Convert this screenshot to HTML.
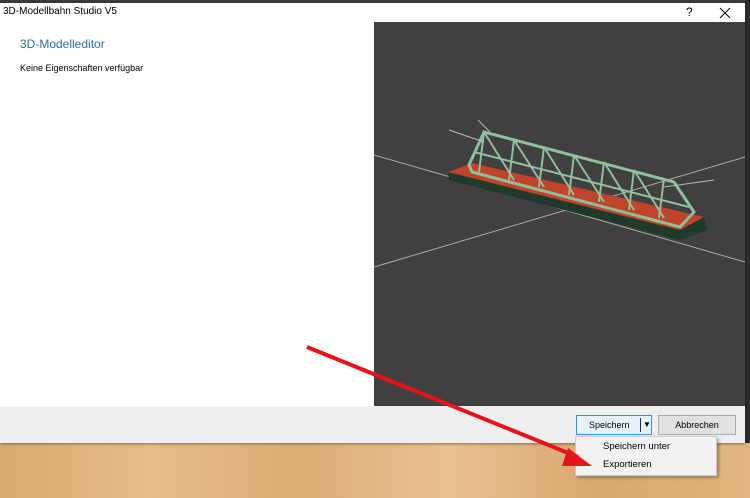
<!DOCTYPE html>
<html><head><meta charset="utf-8"><style>
body{margin:0;width:750px;height:498px;overflow:hidden;position:relative;font-family:"Liberation Sans",sans-serif;background:linear-gradient(90deg,#d9ab72,#e6bd88 20%,#dcae77 40%,#e8c291 60%,#d8a96f 80%,#e2b680);}
.a{position:absolute}
</style></head><body>
<div class="a" style="left:0;top:0;width:750px;height:3px;background:#3a3a3a"></div>
<div class="a" style="left:745px;top:0;width:5px;height:443px;background:#2c2c2c"></div>
<div class="a" style="left:0;top:3px;width:745px;height:440px;background:#fff;box-shadow:0 1px 3px rgba(0,0,0,.4)"></div>
<div class="a" style="left:3px;top:6px;font-size:10px;color:#000">3D-Modellbahn Studio V5</div>
<div class="a" style="left:686px;top:5px;font-size:12px;color:#000">?</div>
<svg class="a" style="left:719px;top:7px" width="12" height="12"><path d="M1,1L11,11M11,1L1,11" stroke="#000" stroke-width="1"/></svg>
<div class="a" style="left:20px;top:37px;font-size:12px;color:#2e6da4">3D-Modelleditor</div>
<div class="a" style="left:20px;top:63px;font-size:9px;color:#000">Keine Eigenschaften verfügbar</div>
<div class="a" style="left:374px;top:22px;width:371px;height:384px;background:#404040"></div>
<svg class="a" style="left:374px;top:22px" width="371" height="384">
<line x1="0" y1="133" x2="371" y2="240" stroke="#aaa" stroke-width="1"/>
<line x1="0" y1="245" x2="371" y2="135" stroke="#aaa" stroke-width="1"/>
<polygon points="74,150 98,141 330,195 333,208 306,218 75,158" fill="#1f3a2a"/>
<polygon points="74,150 98,141 330,195 306,208" fill="#c0442a"/>
<polygon points="95,143 110,110 300,160 320,190 306,205 98,150" fill="none" stroke="#8fbf9c" stroke-width="3"/>
<path d="M110,110 L105,150 M140,118 L135,158 M170,125 L165,165 M200,133 L195,173 M230,140 L225,180 M260,148 L255,188 M290,156 L285,196 M110,110 L140,158 M140,118 L170,165 M170,125 L200,173 M200,133 L230,180 M230,140 L260,188 M260,148 L290,196 M100,130 L315,185" stroke="#8fbf9c" stroke-width="2" fill="none"/>
<line x1="75" y1="108" x2="110" y2="120" stroke="#bbb"/><line x1="104" y1="98" x2="116" y2="110" stroke="#bbb"/>
<line x1="290" y1="165" x2="340" y2="158" stroke="#bbb"/>
</svg>
<div class="a" style="left:0;top:406px;width:745px;height:37px;background:#efefef"></div>
<div class="a" style="left:576px;top:415px;width:74px;height:18px;background:#e5f1fb;border:1px solid #3c8fd6;font-size:9px;line-height:18px"><span style="margin-left:12px">Speichern</span><span style="position:absolute;left:63px;top:2px;width:1px;height:14px;background:#333"></span><span style="position:absolute;left:66px;top:0;font-size:8px">▼</span></div>
<div class="a" style="left:658px;top:415px;width:76px;height:18px;background:#e1e1e1;border:1px solid #adadad;font-size:9px;line-height:18px;text-align:center">Abbrechen</div>
<div class="a" style="left:575px;top:436px;width:140px;height:38px;background:#f2f2f2;border:1px solid #ccc;box-shadow:2px 2px 3px rgba(0,0,0,.3);font-size:9.5px"><div style="position:absolute;left:27px;top:4px">Speichern unter</div><div style="position:absolute;left:27px;top:22px">Exportieren</div></div>
<svg class="a" style="left:0;top:0" width="750" height="498"><line x1="307" y1="347" x2="578" y2="457" stroke="#e8141a" stroke-width="4"/><polygon points="592,466 568,448 562,466" fill="#e8141a"/></svg>
</body></html>
